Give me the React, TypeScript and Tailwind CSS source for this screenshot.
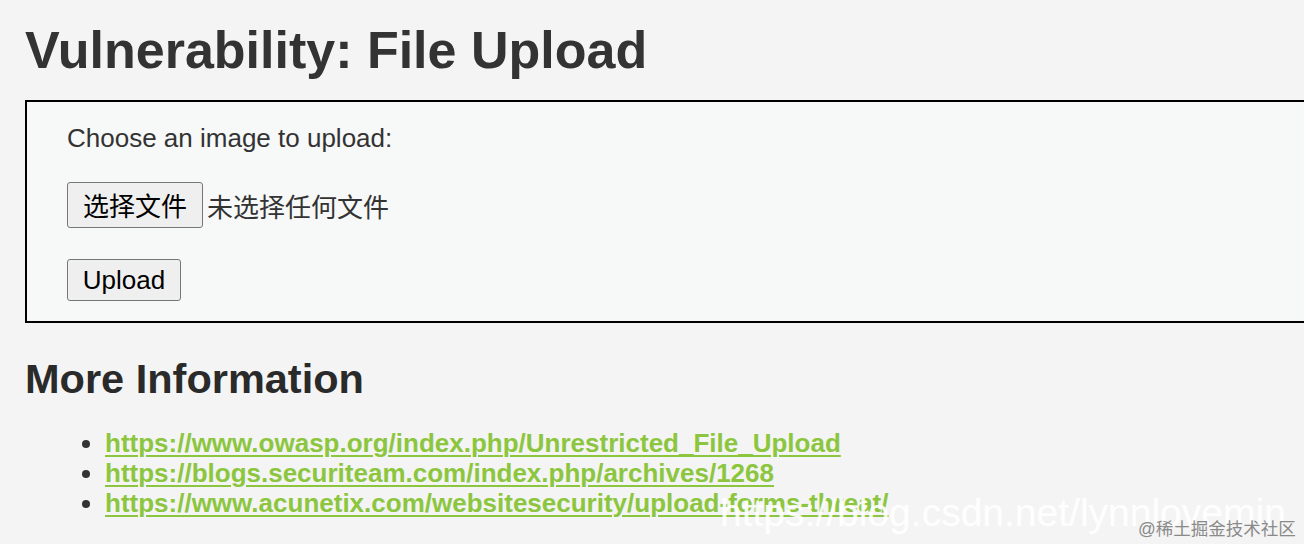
const LINKS = [
  'https://www.owasp.org/index.php/Unrestricted_File_Upload',
  'https://blogs.securiteam.com/index.php/archives/1268',
  'https://www.acunetix.com/websitesecurity/upload-forms-threat/',
]

const FONT = "font-['Liberation_Sans',Arial,'Noto_Sans_CJK_SC',sans-serif]"

export default function App() {
  return (
    <div className={`relative h-[544px] w-[1304px] overflow-hidden bg-[#f4f4f4] pl-[25px] text-[#333] ${FONT}`}>
      <h1 className="pt-[20px] text-[52px] font-bold leading-[60px] text-[#333]">Vulnerability: File Upload</h1>

      {/* upload form */}
      <div className="mt-[20px] h-[223px] w-[1300px] border-2 border-black bg-[#f7f8f8] pl-[40px] pt-[21px]">
        <p className="text-[26px] leading-[30px]">Choose an image to upload:</p>
        <div className="mt-[29px] flex items-center">
          <button className="flex h-[46px] w-[136px] items-center justify-center rounded-[3px] border border-[#767676] bg-[#efefef] pt-[5px] text-[26px] text-black">
            选择文件
          </button>
          <span className="ml-[4px] pt-[6px] text-[26px] leading-[30px] text-[#333]">未选择任何文件</span>
        </div>
        <button className="mt-[31px] flex h-[42px] w-[114px] items-center justify-center rounded-[3px] border border-[#767676] bg-[#efefef] text-[26px] text-black">
          Upload
        </button>
      </div>

      <h2 className="mt-[32px] text-[41.5px] font-bold leading-[48px] text-[#2a2a2a]">More Information</h2>
      <ul className="mt-[25px] list-disc pl-[80px] marker:text-[#333]">
        {LINKS.map(l => (
          <li key={l} className="text-[26px] leading-[30px]">
            <a href={l} className="font-bold text-[#8cc63f] underline decoration-2 underline-offset-[3px]">{l}</a>
          </li>
        ))}
      </ul>

      {/* watermark */}
      <div className="absolute left-[720px] top-[490px] text-[39px] leading-[46px] text-white/90">https://blog.csdn.net/lynnlovemin</div>
      <div className="absolute left-[1138px] top-[517px] text-[17.5px] leading-[24px] text-[#8a8a8a]">@稀土掘金技术社区</div>
    </div>
  )
}
